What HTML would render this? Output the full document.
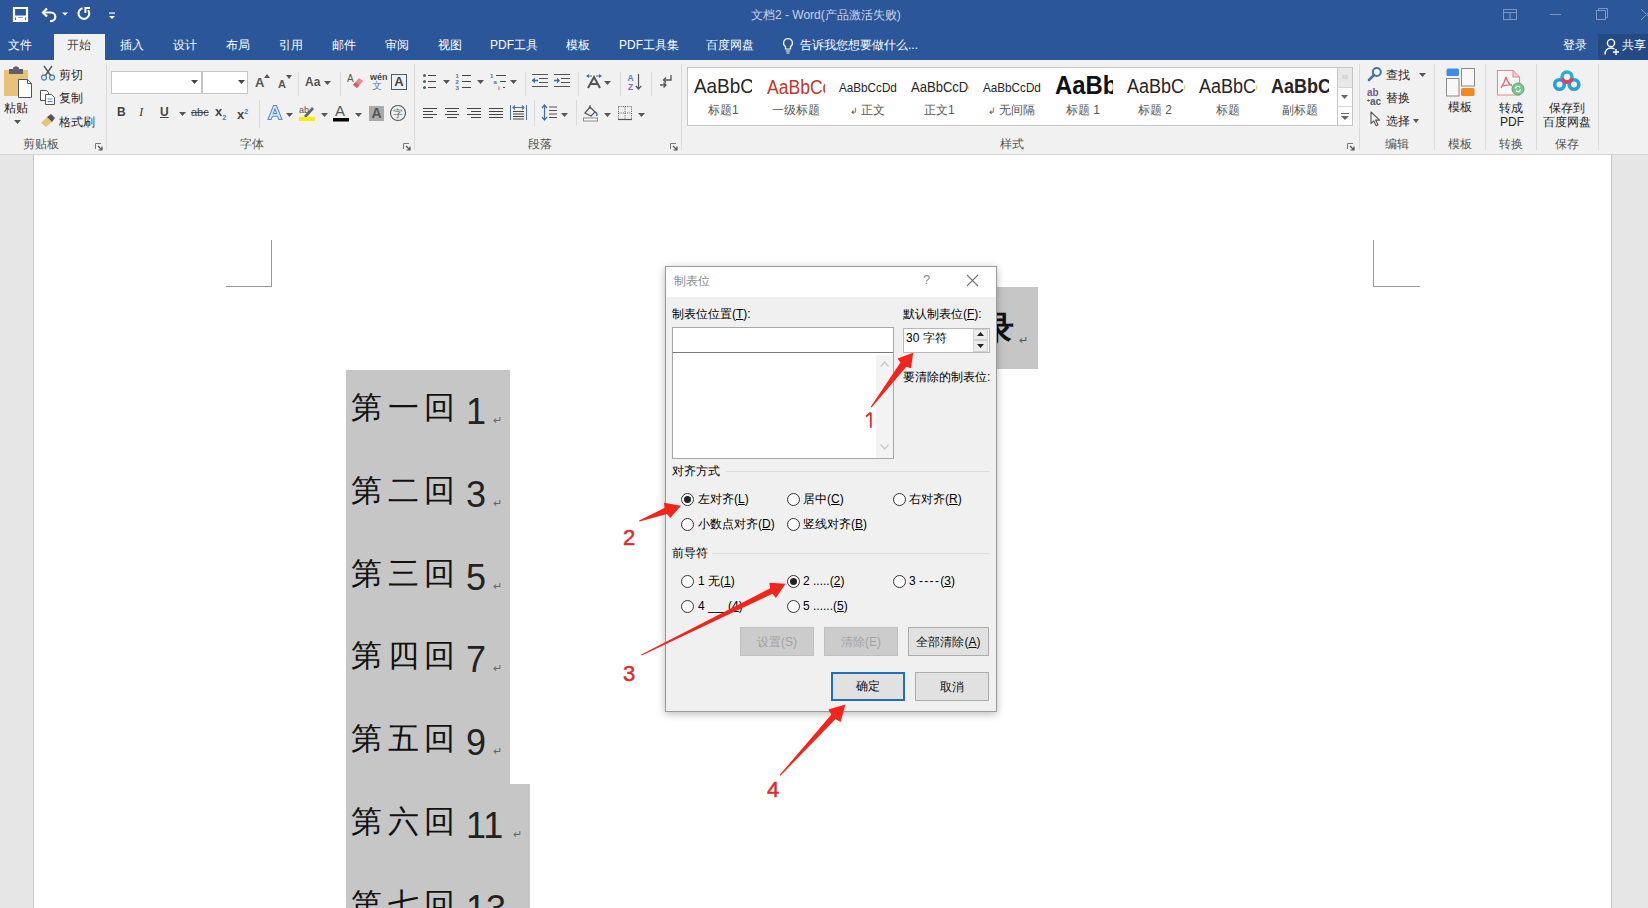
<!DOCTYPE html>
<html><head><meta charset="utf-8">
<style>
*{margin:0;padding:0;box-sizing:border-box}
html,body{width:1648px;height:908px;overflow:hidden;background:#e6e6e6;font-family:"Liberation Sans",sans-serif}
.a{position:absolute;white-space:nowrap}
#title{left:0;top:0;width:1648px;height:60px;background:#2b579a}
#ribbon{left:0;top:60px;width:1648px;height:95px;background:#f1f1f1;border-bottom:1px solid #d4d4d4}
#page{left:33px;top:155px;width:1579px;height:753px;background:#fff;border-left:1px solid #c6c6c6;border-right:1px solid #c6c6c6}
.tab{top:38px;font-size:12px;color:#fff;line-height:14px}
.rt{font-size:12px;color:#262626;line-height:14px}
.grp{top:137px;font-size:12px;color:#555;line-height:14px}
.sep{top:64px;width:1px;height:86px;background:#dadada}
.dl{font-size:12px;color:#000;line-height:14px}
.radio{width:13px;height:13px;border:1px solid #333;border-radius:50%;background:#fff}
.radio.on::after{content:"";position:absolute;left:2px;top:2px;width:7px;height:7px;border-radius:50%;background:#222}
.btn{height:30px;border:1px solid #adadad;background:#e1e1e1;font-size:12px;color:#111;text-align:center;line-height:28px}
.doc{font-size:36px;color:#111;line-height:40px;letter-spacing:4px}
.sty{line-height:26px}
.sl{top:103px;font-size:12px;color:#555;line-height:14px;position:absolute}
.num{font-size:22px;color:#dc2b2b;line-height:24px;-webkit-text-stroke:0.5px #dc2b2b}
.kai{font-size:31px;font-weight:300;color:#111;line-height:40px;letter-spacing:5.5px}
.dig{font-size:36px;color:#222;line-height:40px}
.ret{font-size:11px;color:#666;line-height:12px}
.btn.dis{background:#cccccc;border-color:#bfbfbf;color:#a3a3a3}
</style></head><body>
<div id="title" class="a"></div>
<div id="ribbon" class="a"></div>
<div id="page" class="a"></div>

<!-- title text -->
<div class="a" style="left:751px;top:8px;font-size:12px;color:#c9d3e6;line-height:14px">文档2 - Word(产品激活失败)</div>

<!-- tabs -->
<div class="a" style="left:54px;top:34px;width:51px;height:26px;background:#f1f1f1"></div>
<div class="a tab" style="left:8px">文件</div>
<div class="a tab" style="left:67px;color:#3c4650">开始</div>
<div class="a tab" style="left:120px">插入</div>
<div class="a tab" style="left:173px">设计</div>
<div class="a tab" style="left:226px">布局</div>
<div class="a tab" style="left:279px">引用</div>
<div class="a tab" style="left:332px">邮件</div>
<div class="a tab" style="left:385px">审阅</div>
<div class="a tab" style="left:438px">视图</div>
<div class="a tab" style="left:490px">PDF工具</div>
<div class="a tab" style="left:566px">模板</div>
<div class="a tab" style="left:619px">PDF工具集</div>
<div class="a tab" style="left:706px">百度网盘</div>
<div class="a tab" style="left:800px">告诉我您想要做什么...</div>
<div class="a tab" style="left:1563px">登录</div>
<div class="a" style="left:1598px;top:34px;width:50px;height:26px;background:#234a84"></div>
<div class="a tab" style="left:1622px">共享</div>


<!-- QAT -->
<svg class="a" style="left:12px;top:6px" width="17" height="17" viewBox="0 0 17 17"><path d="M2 2h13v13H2z" fill="none" stroke="#fff" stroke-width="2.2"/><path d="M2 10.5h13" stroke="#fff" stroke-width="2"/><path d="M5 11v4M12 11v4M5 13h7" stroke="#fff" stroke-width="2"/></svg>
<svg class="a" style="left:40px;top:5px" width="30" height="18" viewBox="0 0 30 18"><path d="M3.5 7.5h7.5a4.3 4.3 0 0 1 0 8.6h-1" fill="none" stroke="#fff" stroke-width="2.2"/><path d="M7 3.5L3 7.5l4 4" fill="none" stroke="#fff" stroke-width="2.2"/><path d="M22 7.5h6l-3 3z" fill="#fff"/></svg>
<svg class="a" style="left:75px;top:5px" width="18" height="18" viewBox="0 0 18 18"><path d="M7.5 3.2A5.4 5.4 0 1 0 13.2 5.2" fill="none" stroke="#fff" stroke-width="2.1"/><path d="M15 3.1H10.4V8" fill="none" stroke="#fff" stroke-width="2"/></svg>
<svg class="a" style="left:108px;top:11px" width="8" height="10" viewBox="0 0 8 10"><rect x="1" y="1.5" width="6" height="1.2" fill="#fff"/><path d="M1 5h6l-3 3z" fill="#fff"/></svg>
<!-- window controls -->
<svg class="a" style="left:1502px;top:8px" width="16" height="14" viewBox="0 0 16 14"><rect x="1.5" y="1.5" width="13" height="10" fill="none" stroke="#7d96c2" stroke-width="1"/><path d="M1.5 4.5h13M8 4.5v7" stroke="#7d96c2" stroke-width="1"/></svg>
<div class="a" style="left:1550px;top:14px;width:11px;height:1px;background:#7d96c2"></div>
<svg class="a" style="left:1595px;top:7px" width="14" height="14" viewBox="0 0 14 14"><rect x="1.5" y="3.5" width="9" height="9" fill="none" stroke="#7d96c2"/><path d="M3.5 3.5v-2h9v9h-2" fill="none" stroke="#7d96c2"/></svg>
<svg class="a" style="left:1640px;top:8px" width="8" height="14" viewBox="0 0 8 14"><path d="M1 1l11 11M1 12L12 1" stroke="#7d96c2" stroke-width="1"/></svg>
<!-- lightbulb & share icon -->
<svg class="a" style="left:782px;top:37px" width="12" height="18" viewBox="0 0 12 18"><path d="M6 1.5a4.5 4.5 0 0 0-2.5 8.2V12h5V9.7A4.5 4.5 0 0 0 6 1.5z" fill="none" stroke="#fff" stroke-width="1.2"/><path d="M3.8 14h4.4M4.5 16h3" stroke="#fff" stroke-width="1.2"/></svg>
<svg class="a" style="left:1604px;top:38px" width="16" height="18" viewBox="0 0 16 18"><circle cx="7" cy="5" r="3.6" fill="none" stroke="#fff" stroke-width="1.4"/><path d="M1 16.5c0-4 2.5-6.5 6-6.5 1.5 0 2.6.4 3.5 1" fill="none" stroke="#fff" stroke-width="1.4"/><path d="M12 11v6M9 14h6" stroke="#fff" stroke-width="1.4"/></svg>

<!-- ===== Clipboard group ===== -->
<svg class="a" style="left:3px;top:66px" width="32" height="33" viewBox="0 0 32 33"><rect x="1" y="4" width="24" height="26" fill="#e9c27a"/><path d="M6 3h14v5H6z" fill="#5f5f6b"/><rect x="10" y="0.5" width="6" height="4" rx="2" fill="#5f5f6b"/><path d="M15.5 13.5h9l4 4v14h-13z" fill="#fff" stroke="#555" stroke-width="1"/><path d="M24.5 13.5v4h4" fill="none" stroke="#555" stroke-width="1"/></svg>
<div class="a rt" style="left:4px;top:101px">粘贴</div>
<svg class="a" style="left:14px;top:120px" width="7" height="4"><path d="M0 0h7L3.5 4z" fill="#555"/></svg>
<svg class="a" style="left:40px;top:65px" width="16" height="16" viewBox="0 0 16 16"><path d="M4 1l7 10M12 1L5 11" stroke="#555" stroke-width="1.4"/><circle cx="4" cy="12.5" r="2.5" fill="none" stroke="#4a8bc2" stroke-width="1.3"/><circle cx="12" cy="12.5" r="2.5" fill="none" stroke="#4a8bc2" stroke-width="1.3"/></svg>
<div class="a rt" style="left:59px;top:68px">剪切</div>
<svg class="a" style="left:39px;top:89px" width="17" height="16" viewBox="0 0 17 16"><path d="M1.5 1.5h6l2 2v8h-8z" fill="#fff" stroke="#555"/><path d="M6.5 5.5h6l3 3v7h-9z" fill="#fff" stroke="#555"/><path d="M8.5 10h5M8.5 12.5h5" stroke="#4a8bc2"/></svg>
<div class="a rt" style="left:59px;top:91px">复制</div>
<svg class="a" style="left:40px;top:112px" width="17" height="16" viewBox="0 0 17 16"><path d="M1 11l6-6 5 5-6 5z" fill="#e9c27a"/><path d="M7 5l4-3 4 4-3 4z" fill="#555"/></svg>
<div class="a rt" style="left:59px;top:115px">格式刷</div>
<div class="a grp" style="left:23px">剪贴板</div>
<svg class="a" style="left:95px;top:143px" width="8" height="8" viewBox="0 0 8 8"><path d="M0.5 6V0.5H6" fill="none" stroke="#777"/><path d="M3 3l4 4M7 3.5V7H3.5" fill="none" stroke="#555" stroke-width="1.2"/></svg>
<div class="a sep" style="left:106px"></div>

<!-- ===== Font group ===== -->
<div class="a" style="left:111px;top:71px;width:91px;height:23px;background:#fff;border:1px solid #c6c6c6"></div>
<svg class="a" style="left:191px;top:80px" width="7" height="4"><path d="M0 0h7L3.5 4z" fill="#444"/></svg>
<div class="a" style="left:202px;top:71px;width:46px;height:23px;background:#fff;border:1px solid #c6c6c6"></div>
<svg class="a" style="left:238px;top:80px" width="7" height="4"><path d="M0 0h7L3.5 4z" fill="#444"/></svg>
<div class="a" style="left:255px;top:76px;font-size:13px;font-weight:bold;color:#555;line-height:14px">A</div>
<svg class="a" style="left:264px;top:74px" width="6" height="4"><path d="M0 4h6L3 0z" fill="#555"/></svg>
<div class="a" style="left:278px;top:78px;font-size:11px;font-weight:bold;color:#555;line-height:12px">A</div>
<svg class="a" style="left:286px;top:75px" width="6" height="4"><path d="M0 0h6L3 4z" fill="#555"/></svg>
<div class="a" style="left:298px;top:72px;width:1px;height:24px;background:#dadada"></div>
<div class="a" style="left:305px;top:75px;font-size:12px;font-weight:bold;color:#555;line-height:14px">Aa</div>
<svg class="a" style="left:324px;top:81px" width="7" height="4"><path d="M0 0h7L3.5 4z" fill="#555"/></svg>
<div class="a" style="left:340px;top:72px;width:1px;height:24px;background:#dadada"></div>
<svg class="a" style="left:347px;top:72px" width="18" height="18" viewBox="0 0 18 18"><text x="0" y="10" font-size="10" font-family="Liberation Sans" fill="#555">A</text><path d="M6 13l6-7 4 3-6 7z" fill="#e88a96"/><path d="M6 13l2.5-3 4 3-2.5 3z" fill="#d95b6d"/></svg>
<div class="a" style="left:370px;top:72px;font-size:9px;font-weight:bold;color:#444;line-height:10px">wén</div>
<div class="a" style="left:372px;top:80px;font-size:10px;color:#3d7fc1;line-height:11px">文</div>
<div class="a" style="left:391px;top:74px;width:16px;height:16px;border:1px solid #4a5a70;font-size:13px;font-weight:bold;color:#444;line-height:14px;text-align:center">A</div>
<!-- row2 -->
<div class="a" style="left:117px;top:105px;font-size:12px;font-weight:bold;color:#444;line-height:14px">B</div>
<div class="a" style="left:139px;top:105px;font-size:13px;font-style:italic;font-family:'Liberation Serif',serif;color:#444;line-height:14px">I</div>
<div class="a" style="left:160px;top:105px;font-size:12px;font-weight:bold;color:#444;line-height:14px;text-decoration:underline">U</div>
<svg class="a" style="left:179px;top:112px" width="7" height="4"><path d="M0 0h7L3.5 4z" fill="#555"/></svg>
<div class="a" style="left:191px;top:105px;font-size:11px;color:#444;line-height:14px;text-decoration:line-through">abc</div>
<div class="a" style="left:215px;top:104px;font-size:13px;font-weight:bold;color:#444;line-height:16px">x<sub style="font-size:7px;color:#3d7fc1">2</sub></div>
<div class="a" style="left:237px;top:104px;font-size:13px;font-weight:bold;color:#444;line-height:16px">x<sup style="font-size:7px;color:#3d7fc1">2</sup></div>
<div class="a" style="left:259px;top:100px;width:1px;height:28px;background:#dadada"></div>
<svg class="a" style="left:267px;top:104px" width="16" height="17" viewBox="0 0 16 17"><path d="M1 15.5L6.5 1.5h3L15 15.5h-3.2l-1.2-3.3H5.4l-1.2 3.3z M6.3 9.6h3.4L8 4.8z" fill="#dce9f7" stroke="#5b8ec6" stroke-width="1.1" fill-rule="evenodd"/></svg>
<svg class="a" style="left:286px;top:113px" width="7" height="4"><path d="M0 0h7L3.5 4z" fill="#555"/></svg>
<svg class="a" style="left:299px;top:104px" width="18" height="18" viewBox="0 0 18 18"><text x="0" y="9" font-size="9" font-family="Liberation Sans" fill="#555">ab</text><path d="M5 12l8-9 2 2-8 9z" fill="#666"/><rect x="0" y="13" width="16" height="4" fill="#f5f000"/></svg>
<svg class="a" style="left:321px;top:113px" width="7" height="4"><path d="M0 0h7L3.5 4z" fill="#555"/></svg>
<svg class="a" style="left:333px;top:103px" width="18" height="19" viewBox="0 0 18 19"><text x="2" y="13" font-size="15" font-family="Liberation Sans" fill="#555">A</text><rect x="0" y="15" width="16" height="3.5" fill="#000"/></svg>
<svg class="a" style="left:355px;top:113px" width="7" height="4"><path d="M0 0h7L3.5 4z" fill="#555"/></svg>
<div class="a" style="left:369px;top:106px;width:15px;height:15px;background:#aaa;font-size:14px;font-weight:bold;color:#555;line-height:15px;text-align:center">A</div>
<svg class="a" style="left:389px;top:104px" width="18" height="18" viewBox="0 0 18 18"><circle cx="9" cy="9" r="7.5" fill="none" stroke="#555" stroke-width="1.1"/><text x="4" y="13" font-size="10" fill="#555">字</text></svg>
<div class="a grp" style="left:240px">字体</div>
<svg class="a" style="left:403px;top:143px" width="8" height="8" viewBox="0 0 8 8"><path d="M0.5 6V0.5H6" fill="none" stroke="#777"/><path d="M3 3l4 4M7 3.5V7H3.5" fill="none" stroke="#555" stroke-width="1.2"/></svg>
<div class="a sep" style="left:414px"></div>

<!-- ===== Paragraph group ===== -->
<svg class="a" style="left:0;top:0" width="520" height="95" viewBox="0 0 520 95">
<g fill="#4f5f75"><circle cx="424.5" cy="75.5" r="1.5"/><circle cx="424.5" cy="81.5" r="1.5"/><circle cx="424.5" cy="87.5" r="1.5"/></g>
<path d="M428 75.5h8M428 81.5h8M428 87.5h8" stroke="#444" stroke-width="1"/>
<path d="M443 80h7l-3.5 4z" fill="#555"/>
<g font-size="6" font-weight="bold" fill="#4f6f95" font-family="Liberation Sans"><text x="455.5" y="78">1</text><text x="455.5" y="84">2</text><text x="455.5" y="90">3</text></g>
<path d="M462 75.5h9M462 81.5h9M462 87.5h9" stroke="#444" stroke-width="1"/>
<path d="M477 80h7l-3.5 4z" fill="#555"/>
<g font-size="6" font-weight="bold" fill="#4f6f95" font-family="Liberation Sans"><text x="490" y="78">1</text><text x="493.5" y="84">a</text><text x="498" y="90">i</text></g>
<path d="M496 75.5h10M500 81.5h6M503 87.5h2" stroke="#444" stroke-width="1"/>
<path d="M510 80h7l-3.5 4z" fill="#555"/>
</svg>
<div class="a" style="left:525px;top:72px;width:1px;height:24px;background:#dadada"></div>
<svg class="a" style="left:531px;top:73px" width="18" height="16" viewBox="0 0 18 16"><path d="M1 1.5h16M8 5.5h9M8 9.5h9M1 13.5h16" stroke="#555" stroke-width="1.2"/><path d="M1 7.5h6" stroke="#3d6fb0" stroke-width="1.6"/><path d="M4 4.5L1 7.5l3 3z" fill="#3d6fb0"/></svg>
<svg class="a" style="left:553px;top:73px" width="18" height="16" viewBox="0 0 18 16"><path d="M1 1.5h16M8 5.5h9M8 9.5h9M1 13.5h16" stroke="#555" stroke-width="1.2"/><path d="M1 7.5h5" stroke="#3d6fb0" stroke-width="1.6"/><path d="M4 4.5l3 3-3 3z" fill="#3d6fb0"/></svg>
<div class="a" style="left:578px;top:72px;width:1px;height:24px;background:#dadada"></div>
<svg class="a" style="left:585px;top:73px" width="18" height="16" viewBox="0 0 18 16"><path d="M3 15L9 4l6 11M5.5 11h7" fill="none" stroke="#555" stroke-width="2"/><path d="M1 3l3-2v4zM17 3l-3-2v4z" fill="#3d6fb0"/><path d="M3 3h4M11 3h4" stroke="#3d6fb0" stroke-width="1"/></svg>
<svg class="a" style="left:604px;top:81px" width="7" height="4"><path d="M0 0h7L3.5 4z" fill="#555"/></svg>
<div class="a" style="left:620px;top:72px;width:1px;height:24px;background:#dadada"></div>
<svg class="a" style="left:627px;top:73px" width="16" height="18" viewBox="0 0 16 18"><text x="0.5" y="8" font-size="8.5" font-weight="bold" fill="#5b7fb5" font-family="Liberation Sans">A</text><text x="1" y="16.5" font-size="8.5" font-weight="bold" fill="#8a6ab0" font-family="Liberation Sans">Z</text><path d="M11.5 1v15M8.8 13l2.7 3 2.7-3" fill="none" stroke="#555" stroke-width="1.2"/></svg>
<div class="a" style="left:651px;top:72px;width:1px;height:24px;background:#dadada"></div>
<svg class="a" style="left:659px;top:74px" width="14" height="14" viewBox="0 0 14 14"><path d="M12 1v5H5" fill="none" stroke="#555" stroke-width="1.3"/><path d="M7 3.5L4.5 6 7 8.5" fill="none" stroke="#555" stroke-width="1.3"/><path d="M1 11h6M4.5 8.5L7 11l-2.5 2.5" fill="none" stroke="#555" stroke-width="1.3"/></svg>
<!-- row2 -->
<svg class="a" style="left:0;top:0" width="540" height="125" viewBox="0 0 540 125">
<path d="M423 108.5h14M423 111.5h10M423 114.5h14M423 117.5h10" stroke="#444" stroke-width="1"/>
<path d="M445 108.5h14M447 111.5h10M445 114.5h14M447 117.5h10" stroke="#444" stroke-width="1"/>
<path d="M467 108.5h14M471 111.5h10M467 114.5h14M471 117.5h10" stroke="#444" stroke-width="1"/>
<path d="M489 108.5h14M489 111.5h14M489 114.5h14M489 117.5h14" stroke="#444" stroke-width="1"/>
<path d="M510.5 105v15M526.5 105v15" stroke="#4f6f95" stroke-width="1"/>
<path d="M513 107.5h11M515 105.5l-2 2 2 2M522 105.5l2 2-2 2" fill="none" stroke="#4f6f95" stroke-width="1.1"/>
<path d="M513 111.5h11M513 114h11M513 116.5h11M513 119h11" stroke="#444" stroke-width="1"/>
</svg>
<div class="a" style="left:534px;top:100px;width:1px;height:26px;background:#dadada"></div>
<svg class="a" style="left:541px;top:104px" width="16" height="17" viewBox="0 0 16 17"><path d="M3.5 1v15M1 4l2.5-3L6 4M1 13l2.5 3L6 13" fill="none" stroke="#3d6fb0" stroke-width="1.2"/><path d="M8 3h8M8 6.5h8M8 10h8M8 13.5h8" stroke="#555" stroke-width="1.2"/></svg>
<svg class="a" style="left:561px;top:113px" width="7" height="4"><path d="M0 0h7L3.5 4z" fill="#555"/></svg>
<div class="a" style="left:576px;top:100px;width:1px;height:26px;background:#dadada"></div>
<svg class="a" style="left:582px;top:104px" width="18" height="18" viewBox="0 0 18 18"><path d="M3 9l5-6 5 5-4 4z" fill="none" stroke="#555" stroke-width="1.2"/><path d="M8 1v4" stroke="#555"/><path d="M13 8c2 1 2.5 3 1.5 4" fill="none" stroke="#3d6fb0" stroke-width="1.5"/><rect x="1.5" y="14" width="14" height="3" fill="#fff" stroke="#888"/></svg>
<svg class="a" style="left:604px;top:113px" width="7" height="4"><path d="M0 0h7L3.5 4z" fill="#555"/></svg>
<svg class="a" style="left:617px;top:105px" width="16" height="16" viewBox="0 0 16 16"><path d="M1.5 1.5h13M1.5 8h13M1.5 1.5v13M8 1.5v13M14.5 1.5v13" fill="none" stroke="#555" stroke-width="1" stroke-dasharray="1 1.2"/><path d="M1 14.5h14" stroke="#555" stroke-width="1.2"/></svg>
<svg class="a" style="left:638px;top:113px" width="7" height="4"><path d="M0 0h7L3.5 4z" fill="#555"/></svg>
<div class="a grp" style="left:528px">段落</div>
<svg class="a" style="left:670px;top:143px" width="8" height="8" viewBox="0 0 8 8"><path d="M0.5 6V0.5H6" fill="none" stroke="#777"/><path d="M3 3l4 4M7 3.5V7H3.5" fill="none" stroke="#555" stroke-width="1.2"/></svg>
<div class="a sep" style="left:681px"></div>


<!-- ===== Styles group ===== -->
<div class="a" style="left:687px;top:67px;width:666px;height:59px;background:#fff;border:1px solid #c6c6c6"></div>
<div class="a" style="left:694px;top:74px;width:58px;height:30px;overflow:hidden"><div style="font-size:21px;font-weight:normal;color:#262626;line-height:24px;transform:scaleX(.9);transform-origin:0 0;white-space:nowrap">AaBbCc</div></div>
<div class="a sl" style="left:708px">标题1</div>
<div class="a" style="left:767px;top:75px;width:58px;height:30px;overflow:hidden"><div style="font-size:19.5px;font-weight:normal;color:#c0392b;line-height:24px;transform:scaleX(.9);transform-origin:0 0;white-space:nowrap">AaBbCc</div></div>
<div class="a sl" style="left:772px">一级标题</div>
<div class="a" style="left:839px;top:76px;width:58px;height:30px;overflow:hidden"><div style="font-size:13px;font-weight:normal;color:#262626;line-height:24px;transform:scaleX(.9);transform-origin:0 0;white-space:nowrap">AaBbCcDd</div></div>
<div class="a sl" style="left:850px"><span style="font-size:9px">↲</span> 正文</div>
<div class="a" style="left:911px;top:75px;width:58px;height:30px;overflow:hidden"><div style="font-size:14.5px;font-weight:normal;color:#262626;line-height:24px;transform:scaleX(.9);transform-origin:0 0;white-space:nowrap">AaBbCcDd</div></div>
<div class="a sl" style="left:924px">正文1</div>
<div class="a" style="left:983px;top:76px;width:58px;height:30px;overflow:hidden"><div style="font-size:13px;font-weight:normal;color:#262626;line-height:24px;transform:scaleX(.9);transform-origin:0 0;white-space:nowrap">AaBbCcDd</div></div>
<div class="a sl" style="left:988px"><span style="font-size:9px">↲</span> 无间隔</div>
<div class="a" style="left:1055px;top:73px;width:58px;height:30px;overflow:hidden"><div style="font-size:26.5px;font-weight:bold;color:#111;line-height:24px;transform:scaleX(.9);transform-origin:0 0;white-space:nowrap">AaBbCc</div></div>
<div class="a sl" style="left:1066px">标题 1</div>
<div class="a" style="left:1127px;top:74px;width:58px;height:30px;overflow:hidden"><div style="font-size:20px;font-weight:normal;color:#262626;line-height:24px;transform:scaleX(.9);transform-origin:0 0;white-space:nowrap">AaBbCc</div></div>
<div class="a sl" style="left:1138px">标题 2</div>
<div class="a" style="left:1199px;top:74px;width:58px;height:30px;overflow:hidden"><div style="font-size:20px;font-weight:normal;color:#262626;line-height:24px;transform:scaleX(.9);transform-origin:0 0;white-space:nowrap">AaBbCc</div></div>
<div class="a sl" style="left:1216px">标题</div>
<div class="a" style="left:1271px;top:74px;width:58px;height:30px;overflow:hidden"><div style="font-size:20px;font-weight:bold;color:#262626;line-height:24px;transform:scaleX(.9);transform-origin:0 0;white-space:nowrap">AaBbCc</div></div>
<div class="a sl" style="left:1282px">副标题</div>
<div class="a" style="left:1337px;top:67px;width:16px;height:59px;border:1px solid #c6c6c6;background:#fff"></div>
<div class="a" style="left:1338px;top:68px;width:14px;height:19px;background:#e8e8e8"></div>
<div class="a" style="left:1342px;top:75px;width:6px;height:4px;background:#d8d8d8"></div>
<div class="a" style="left:1338px;top:87px;width:14px;height:1px;background:#d6d6d6"></div>
<svg class="a" style="left:1341px;top:95px" width="7" height="4"><path d="M0 0h7L3.5 4z" fill="#666"/></svg>
<div class="a" style="left:1338px;top:106px;width:14px;height:1px;background:#d6d6d6"></div>
<svg class="a" style="left:1341px;top:112px" width="8" height="8"><path d="M0 1.5h8" stroke="#666"/><path d="M0 4h8L4 8z" fill="#666"/></svg>
<div class="a grp" style="left:1000px">样式</div>
<svg class="a" style="left:1347px;top:143px" width="8" height="8" viewBox="0 0 8 8"><path d="M0.5 6V0.5H6" fill="none" stroke="#777"/><path d="M3 3l4 4M7 3.5V7H3.5" fill="none" stroke="#555" stroke-width="1.2"/></svg>
<div class="a sep" style="left:1359px"></div>

<!-- ===== Editing group ===== -->
<svg class="a" style="left:1367px;top:66px" width="16" height="16" viewBox="0 0 16 16"><circle cx="9.8" cy="6" r="4" fill="#eef3f8" stroke="#46739e" stroke-width="2"/><path d="M7 9L2 14" stroke="#46739e" stroke-width="2.6" stroke-linecap="round"/></svg>
<div class="a rt" style="left:1386px;top:68px">查找</div>
<svg class="a" style="left:1419px;top:73px" width="7" height="4"><path d="M0 0h7L3.5 4z" fill="#555"/></svg>
<svg class="a" style="left:1366px;top:88px" width="18" height="18" viewBox="0 0 18 18"><text x="1" y="8" font-size="10" font-weight="bold" fill="#7a5a8a" font-family="Liberation Sans">ab</text><text x="4" y="17" font-size="10" font-weight="bold" fill="#4f6070" font-family="Liberation Sans">ac</text><path d="M0.8 12.5l2-1.5v3z" fill="#4f6070"/><path d="M2.5 12.5h1.5" stroke="#4f6070"/></svg>
<div class="a rt" style="left:1386px;top:91px">替换</div>
<svg class="a" style="left:1370px;top:111px" width="12" height="16" viewBox="0 0 12 16"><path d="M1 1v11.5l2.8-2.6 2.4 4.8 1.8-.9-2.4-4.7h4z" fill="#f4f4f4" stroke="#555" stroke-width="1.1" stroke-linejoin="round"/></svg>
<div class="a rt" style="left:1386px;top:114px">选择</div>
<svg class="a" style="left:1413px;top:119px" width="6" height="4"><path d="M0 0h6L3 4z" fill="#555"/></svg>
<div class="a grp" style="left:1385px">编辑</div>
<div class="a sep" style="left:1434px"></div>

<!-- ===== Template group ===== -->
<svg class="a" style="left:1446px;top:68px" width="29" height="29" viewBox="0 0 29 29"><rect x="0.5" y="0.5" width="12.5" height="7.5" rx="1.5" fill="#3d8de0"/><rect x="15.5" y="0.5" width="13" height="17.5" fill="#f8f8f8" stroke="#8a8a8a"/><rect x="0.5" y="10.5" width="12.5" height="17.5" fill="#f8f8f8" stroke="#8a8a8a"/><rect x="15" y="20" width="13.5" height="8" rx="1.5" fill="#f28a1e"/></svg>
<div class="a rt" style="left:1448px;top:100px">模板</div>
<div class="a grp" style="left:1448px">模板</div>
<div class="a sep" style="left:1485px"></div>

<!-- ===== Convert group ===== -->
<svg class="a" style="left:1496px;top:69px" width="32" height="28" viewBox="0 0 32 28"><path d="M1.5 1.5h15.5l6.5 6.5v18h-22z" fill="#f8f8f8" stroke="#e48a8f" stroke-width="1.1"/><path d="M17 1.5v6.5h6.5" fill="#f5c8cc" stroke="#e48a8f" stroke-width="1.1"/><path d="M5 19c2-3 4-7 5-11M10 8c1 4 3 7 6 9M7 17c3-1 6-1.5 9-1" fill="none" stroke="#e06a72" stroke-width="1.3"/><circle cx="22" cy="20" r="6" fill="#7cc596" stroke="#5aa574"/><path d="M19.5 19.5a2.5 2.5 0 0 1 4.5-1.2M24.5 20.5a2.5 2.5 0 0 1-4.5 1.2" fill="none" stroke="#fff" stroke-width="1.2"/></svg>
<div class="a rt" style="left:1499px;top:101px">转成</div>
<div class="a rt" style="left:1500px;top:115px">PDF</div>
<div class="a grp" style="left:1499px">转换</div>
<div class="a sep" style="left:1536px"></div>

<!-- ===== Save group ===== -->
<svg class="a" style="left:1552px;top:69px" width="30" height="24" viewBox="0 0 30 24"><circle cx="7.5" cy="15.5" r="4.8" fill="none" stroke="#2a9fd8" stroke-width="3.6"/><circle cx="22" cy="15.5" r="4.8" fill="none" stroke="#2a9fd8" stroke-width="3.6"/><circle cx="15" cy="8" r="5" fill="none" stroke="#2ab0d0" stroke-width="3.6"/><path d="M10.2 9.5A5 5 0 0 0 19.8 9.5" fill="none" stroke="#e3415d" stroke-width="3.6"/></svg>
<div class="a rt" style="left:1549px;top:101px">保存到</div>
<div class="a rt" style="left:1543px;top:115px">百度网盘</div>
<div class="a grp" style="left:1555px">保存</div>
<div class="a sep" style="left:1598px"></div>

<!-- doc corner marks -->
<div class="a" style="left:226px;top:240px;width:46px;height:47px;border-right:1px solid #999;border-bottom:1px solid #999"></div>
<div class="a" style="left:1373px;top:240px;width:47px;height:47px;border-left:1px solid #999;border-bottom:1px solid #999"></div>

<!-- shaded text -->
<div class="a" style="left:346px;top:370px;width:164px;height:414px;background:#c6c6c6"></div>
<div class="a" style="left:346px;top:784px;width:184px;height:124px;background:#c6c6c6"></div>
<div class="a" style="left:996px;top:287px;width:42px;height:82px;background:#c6c6c6"></div>
<div class="a" style="left:980px;top:308px;font-size:34px;font-weight:bold;color:#111;line-height:40px">录</div>
<div class="a" style="left:1019px;top:334px;font-size:11px;color:#555;line-height:12px">↵</div>
<div class="a kai" style="left:351px;top:388.0px">第一回</div>
<div class="a dig" style="left:466px;top:392.0px">1</div>
<div class="a ret" style="left:493px;top:414.0px">↵</div>
<div class="a kai" style="left:351px;top:470.8px">第二回</div>
<div class="a dig" style="left:466px;top:474.8px">3</div>
<div class="a ret" style="left:493px;top:496.8px">↵</div>
<div class="a kai" style="left:351px;top:553.6px">第三回</div>
<div class="a dig" style="left:466px;top:557.6px">5</div>
<div class="a ret" style="left:493px;top:579.6px">↵</div>
<div class="a kai" style="left:351px;top:636.4px">第四回</div>
<div class="a dig" style="left:466px;top:640.4px">7</div>
<div class="a ret" style="left:493px;top:662.4px">↵</div>
<div class="a kai" style="left:351px;top:719.2px">第五回</div>
<div class="a dig" style="left:466px;top:723.2px">9</div>
<div class="a ret" style="left:493px;top:745.2px">↵</div>
<div class="a kai" style="left:351px;top:802.0px">第六回</div>
<div class="a dig" style="left:466px;top:806.0px">11</div>
<div class="a ret" style="left:513px;top:828.0px">↵</div>
<div class="a kai" style="left:351px;top:884.8px">第七回</div>
<div class="a dig" style="left:466px;top:888.8px">13</div>
<div class="a ret" style="left:513px;top:910.8px">↵</div>

<!-- dialog -->
<div class="a" style="left:665px;top:266px;width:332px;height:446px;background:#f0f0f0;border:1px solid #9a9a9a;box-shadow:0 2px 8px rgba(0,0,0,.28)"></div>
<div class="a" style="left:666px;top:267px;width:330px;height:30px;background:#fff"></div>
<div class="a dl" style="left:674px;top:274px;color:#8a8a8a">制表位</div>
<div class="a" style="left:923px;top:272px;font-size:13px;color:#8a8a8a;line-height:16px">?</div>
<svg class="a" style="left:966px;top:274px" width="13" height="13" viewBox="0 0 13 13"><path d="M1 1l11 11M12 1L1 12" stroke="#777" stroke-width="1.1"/></svg>
<div class="a dl" style="left:672px;top:307px">制表位位置(<u>T</u>):</div>
<div class="a" style="left:672px;top:327px;width:222px;height:27px;background:#fff;border:1px solid #a8a8a8;border-bottom:2px solid #7a7a7a"></div>
<div class="a" style="left:672px;top:353px;width:222px;height:106px;background:#fff;border:1px solid #a8a8a8;border-top:none"></div>
<div class="a" style="left:876px;top:355px;width:17px;height:103px;background:#f3f3f3"></div>
<svg class="a" style="left:880px;top:361px" width="9" height="6"><path d="M0.5 5.5L4.5 1l4 4.5" fill="none" stroke="#c8c8c8" stroke-width="1.2"/></svg>
<svg class="a" style="left:880px;top:444px" width="9" height="6"><path d="M0.5 0.5L4.5 5l4-4.5" fill="none" stroke="#c8c8c8" stroke-width="1.2"/></svg>
<div class="a dl" style="left:903px;top:307px">默认制表位(<u>F</u>):</div>
<div class="a" style="left:903px;top:328px;width:87px;height:25px;background:#fff;border:1px solid #b8b8b8"></div>
<div class="a dl" style="left:906px;top:331px">30 字符</div>
<div class="a" style="left:973px;top:329px;width:15px;height:11px;background:#ececec;border:1px solid #d2d2d2"></div>
<div class="a" style="left:973px;top:340px;width:15px;height:12px;background:#ececec;border:1px solid #d2d2d2"></div>
<svg class="a" style="left:977px;top:332px" width="7" height="4"><path d="M0 4h7L3.5 0z" fill="#222"/></svg>
<svg class="a" style="left:977px;top:344px" width="7" height="4"><path d="M0 0h7L3.5 4z" fill="#222"/></svg>
<div class="a dl" style="left:903px;top:370px">要清除的制表位:</div>

<div class="a dl" style="left:672px;top:464px">对齐方式</div>
<div class="a" style="left:726px;top:471px;width:264px;height:1px;background:#dcdcdc"></div>
<div class="a radio on" style="left:681px;top:493px"></div><div class="a dl" style="left:698px;top:492px">左对齐(<u>L</u>)</div>
<div class="a radio" style="left:787px;top:493px"></div><div class="a dl" style="left:803px;top:492px">居中(<u>C</u>)</div>
<div class="a radio" style="left:893px;top:493px"></div><div class="a dl" style="left:909px;top:492px">右对齐(<u>R</u>)</div>
<div class="a radio" style="left:681px;top:518px"></div><div class="a dl" style="left:698px;top:517px">小数点对齐(<u>D</u>)</div>
<div class="a radio" style="left:787px;top:518px"></div><div class="a dl" style="left:803px;top:517px">竖线对齐(<u>B</u>)</div>

<div class="a dl" style="left:672px;top:546px">前导符</div>
<div class="a" style="left:712px;top:553px;width:278px;height:1px;background:#dcdcdc"></div>
<div class="a radio" style="left:681px;top:575px"></div><div class="a dl" style="left:698px;top:574px">1 无(<u>1</u>)</div>
<div class="a radio on" style="left:787px;top:575px"></div><div class="a dl" style="left:803px;top:574px">2 .....(<u>2</u>)</div>
<div class="a radio" style="left:893px;top:575px"></div><div class="a dl" style="left:909px;top:574px">3 <span style="letter-spacing:1.3px">----</span>(<u>3</u>)</div>
<div class="a radio" style="left:681px;top:600px"></div><div class="a dl" style="left:698px;top:599px">4 ___(<u>4</u>)</div>
<div class="a radio" style="left:787px;top:600px"></div><div class="a dl" style="left:803px;top:599px">5 ......(<u>5</u>)</div>

<div class="a btn dis" style="left:740px;top:627px;width:74px;height:29px">设置(S)</div>
<div class="a btn dis" style="left:824px;top:627px;width:74px;height:29px">清除(E)</div>
<div class="a btn" style="left:908px;top:627px;width:81px;height:29px">全部清除(<u>A</u>)</div>
<div class="a btn" style="left:831px;top:672px;width:74px;height:29px;border:2px solid #1f6fb8;line-height:25px">确定</div>
<div class="a btn" style="left:915px;top:672px;width:74px;height:29px">取消</div>

<!-- red arrows -->
<svg class="a" style="left:0;top:0" width="1648" height="908" viewBox="0 0 1648 908">
<g fill="#f3241a">
<path d="M870.6 406.9 L900.5 362.5 L897.6 358.6 L913.2 352.8 L911.0 368.2 L906.3 366.7 L871.6 407.5 Z"/>
<path d="M639.1 520.4 L664.5 508.0 L664.0 502.8 L680.9 505.8 L670.3 518.0 L667.0 513.9 L639.5 521.6 Z"/>
<path d="M641.3 654.4 L770.1 588.3 L769.3 582.8 L785.5 583.8 L775.9 598.0 L772.5 593.8 L641.7 655.6 Z"/>
<path d="M779.6 775.0 L831.4 714.6 L828.4 709.4 L845.4 704.5 L840.6 722.0 L835.6 719.0 L780.4 775.8 Z"/>
</g>
</svg>
<svg class="a" style="left:864px;top:411px" width="10" height="18" viewBox="0 0 10 18"><path d="M6.8 1.5V16.8M6.8 1.5L2 5.5" fill="none" stroke="#e3302c" stroke-width="1.9"/></svg>
<div class="a num" style="left:623px;top:526px">2</div>
<div class="a num" style="left:623px;top:662px">3</div>
<div class="a num" style="left:767px;top:778px">4</div>
</body></html>
